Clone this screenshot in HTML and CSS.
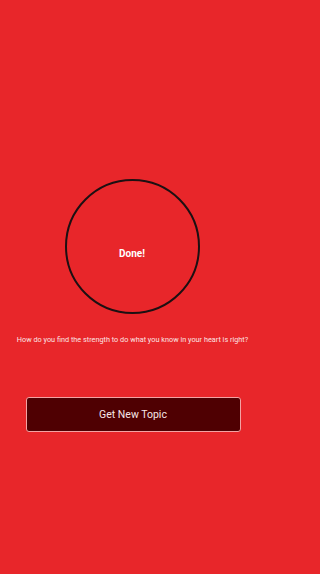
FILE: index.html
```html
<!DOCTYPE html>
<html>
<head>
<meta charset="utf-8">
<link rel="stylesheet" href="styles.css">
</head>
<body>
<main class="screen">
  <div class="timer">
    <span class="timer-label">Done!</span>
  </div>
  <p class="question">How do you find the strength to do what you know in your heart is right?</p>
  <button class="topic-btn">Get New Topic</button>
</main>
</body>
</html>
```
FILE: styles.css
```css
html, body {
  margin: 0;
  padding: 0;
  background: #e8262a;
}
.screen {
  width: 265px;
  height: 574px;
  display: flex;
  flex-direction: column;
  align-items: center;
  font-family: Roboto, "Liberation Sans", sans-serif;
  box-sizing: border-box;
  padding-top: 179px;
}
.timer {
  width: 135px;
  height: 135px;
  box-sizing: border-box;
  border: 2px solid #1c1012;
  border-radius: 50%;
  display: flex;
  align-items: center;
  justify-content: center;
  margin-left: -1px;
}
.timer-label {
  color: #fff;
  font-weight: bold;
  font-size: 10px;
  padding-top: 13px;
}
.question {
  margin: 20px 0 0;
  color: #fbe3e3;
  font-size: 7.3px;
  text-align: center;
  line-height: 12px;
}
.topic-btn {
  margin-top: 51px;
  width: 215px;
  height: 35px;
  box-sizing: border-box;
  background: #4f0002;
  border: 1.5px solid #f3a3a3;
  border-radius: 3px;
  color: #f6e6e6;
  font-family: Roboto, "Liberation Sans", sans-serif;
  font-size: 10.5px;
  margin-left: 1px;
}
```
